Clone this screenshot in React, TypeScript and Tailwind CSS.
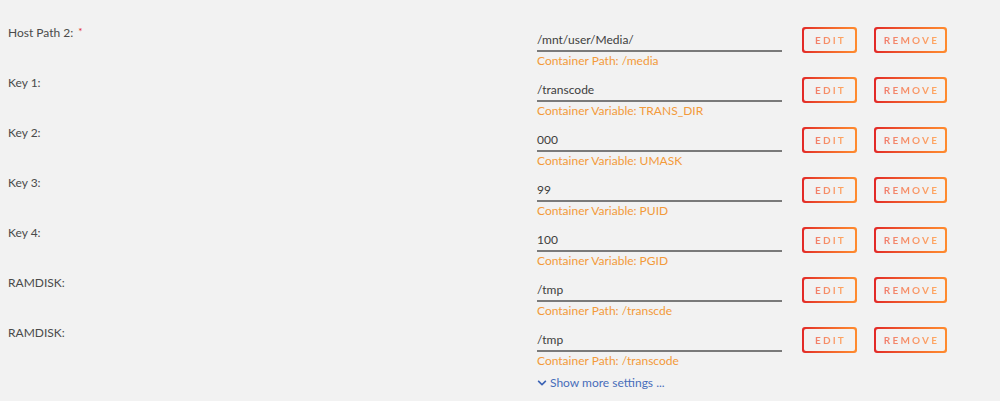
import { FaChevronDown } from 'react-icons/fa';

const rows = [
  { label: 'Host Path 2:', required: true, value: '/mnt/user/Media/', note: 'Container Path: /media' },
  { label: 'Key 1:', value: '/transcode', note: 'Container Variable: TRANS_DIR' },
  { label: 'Key 2:', value: '000', note: 'Container Variable: UMASK' },
  { label: 'Key 3:', value: '99', note: 'Container Variable: PUID' },
  { label: 'Key 4:', value: '100', note: 'Container Variable: PGID' },
  { label: 'RAMDISK:', value: '/tmp', note: 'Container Path: /transcde' },
  { label: 'RAMDISK:', value: '/tmp', note: 'Container Path: /transcode' },
];

function GradientButton({ text, width }: { text: string; width: string }) {
  return (
    <div className={`${width} h-[26px] rounded-[3px] bg-gradient-to-r from-[#e22828] to-[#ff8c2f] p-[2px]`}>
      <div className="w-full h-full rounded-[2px] bg-[#f2f2f2] flex items-center justify-center">
        <span className="bg-gradient-to-r from-[#f07a6a] to-[#ffa860] bg-clip-text text-transparent text-[10px] font-bold tracking-[2.2px] pl-[2px]">
          {text}
        </span>
      </div>
    </div>
  );
}

export default function App() {
  return (
    <div className="w-[1000px] h-[401px] bg-[#f2f2f2] overflow-hidden pt-[25px] pl-[8px] font-['Lato',sans-serif] text-[12px]">
      {rows.map((r, i) => (
        <div key={i} className="flex h-[50px]">
          <div className="w-[529px] leading-4 text-[#4a4a4a]">
            {r.label}
            {r.required && <span className="text-[#e22828] ml-[5px] text-[10px] relative -top-[2px]">*</span>}
          </div>
          <div className="w-[245px]">
            <div className="pt-[7px] pb-[2px] border-b-2 border-[#7a7a7a] leading-4 text-[#3d3d3d]">{r.value}</div>
            <div className="mt-[1px] leading-4 text-[#f39a3a]">{r.note}</div>
          </div>
          <div className="flex gap-[17px] ml-[20px] mt-[2px]">
            <GradientButton text="EDIT" width="w-[55px]" />
            <GradientButton text="REMOVE" width="w-[73px]" />
          </div>
        </div>
      ))}
      <div className="pl-[529px] flex items-center gap-[3px] leading-4 text-[#486dba]">
        <FaChevronDown className="w-[10px] h-[10px] text-[#3b63b5]" />
        <span>Show more settings ...</span>
      </div>
    </div>
  );
}
